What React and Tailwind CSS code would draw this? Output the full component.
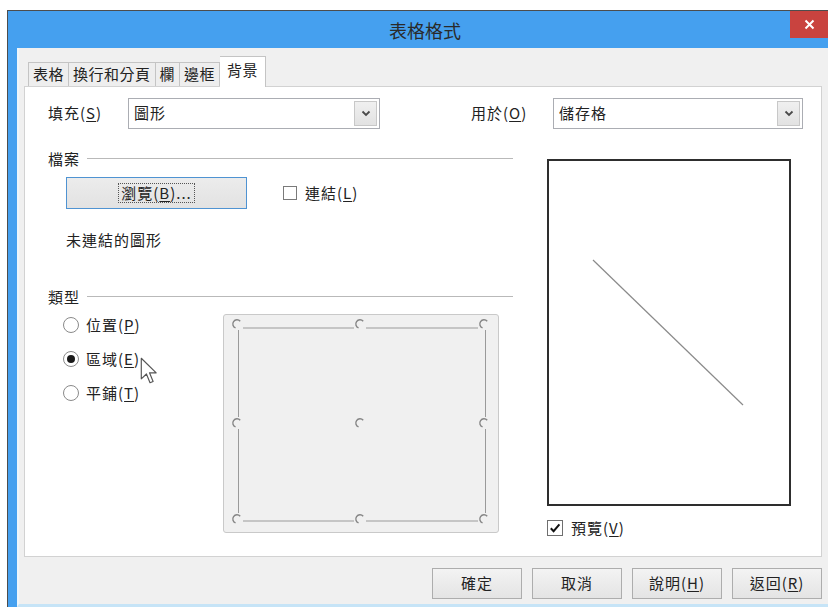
import React from "react";

function U({ c }) {
  return <span className="underline underline-offset-[2px] decoration-1">{c}</span>;
}

function Chevron() {
  return (
    <svg width="10" height="7" viewBox="0 0 10 7">
      <path d="M1.5 1.5 L5 5 L8.5 1.5" fill="none" stroke="#4a4a4a" strokeWidth="1.8" />
    </svg>
  );
}

function Select({ w, value }) {
  return (
    <div className={`${w} h-[31px] bg-white border border-[#abadb3] flex items-center pl-[5px] pr-[2px]`}>
      <span className="flex-1">{value}</span>
      <div className="w-[23px] h-[25px] bg-linear-to-b from-[#f0f0f0] to-[#e2e2e2] border border-[#c8c8c8] flex items-center justify-center">
        <Chevron />
      </div>
    </div>
  );
}

function Heading({ children }) {
  return (
    <div className="h-[17px] flex items-center gap-[7px]">
      <span className="leading-none">{children}</span>
      <div className="flex-1 h-px bg-[#b9b9b9]" />
    </div>
  );
}

function Radio({ checked, children }) {
  return (
    <div className="h-[20px] flex items-center gap-[7px]">
      <div className="w-[16px] h-[16px] rounded-full border border-[#8a8a8a] bg-white flex items-center justify-center">
        {checked && <div className="w-[8px] h-[8px] rounded-full bg-[#1a1a1a]" />}
      </div>
      <span>{children}</span>
    </div>
  );
}

function Btn({ children }) {
  return (
    <div className="w-[90px] h-[31px] border border-[#adadad] bg-linear-to-b from-[#f3f3f3] to-[#e4e4e4] flex items-center justify-center">
      {children}
    </div>
  );
}

function Marker({ cx, cy }) {
  const r = 4.2;
  const sx = cx + r * Math.cos((40 * Math.PI) / 180);
  const sy = cy - r * Math.sin((40 * Math.PI) / 180);
  const ex = cx + r * Math.cos((110 * Math.PI) / 180);
  const ey = cy + r * Math.sin((110 * Math.PI) / 180);
  return (
    <g>
      <circle cx={cx} cy={cy} r="5" fill="#f0f0f0" />
      <path d={`M${sx} ${sy} A${r} ${r} 0 1 0 ${ex} ${ey}`} fill="none" stroke="#858585" strokeWidth="1.4" />
    </g>
  );
}

function GridBox() {
  const xs = [13, 136, 260];
  const ys = [9, 108, 204];
  const line = "#9a9a9a";
  return (
    <svg width="274" height="217" viewBox="0 0 274 217">
      <line x1="19" y1="13" x2="130" y2="13" stroke={line} />
      <line x1="142" y1="13" x2="254" y2="13" stroke={line} />
      <line x1="19" y1="206" x2="130" y2="206" stroke={line} />
      <line x1="142" y1="206" x2="254" y2="206" stroke={line} />
      <line x1="14.5" y1="15" x2="14.5" y2="102" stroke={line} />
      <line x1="14.5" y1="114" x2="14.5" y2="198" stroke={line} />
      <line x1="261.5" y1="15" x2="261.5" y2="102" stroke={line} />
      <line x1="261.5" y1="114" x2="261.5" y2="198" stroke={line} />
      {ys.map((y) => xs.map((x) => <Marker key={`${x}-${y}`} cx={x} cy={y} />))}
    </svg>
  );
}

export default function App() {
  return (
    <div className="relative w-[828px] h-[607px] overflow-hidden bg-white pt-[10px] pl-[7px] font-['Noto_Sans_CJK_TC','Noto_Sans',sans-serif] text-[15px] tracking-[1px] text-[#222222]">
      <div className="h-full flex flex-col border-l border-t border-[#4d4d4d] bg-[#45a0ef]">
        {/* Title bar */}
        <div className="relative h-[37px] shrink-0 flex items-center justify-center pl-[14px]">
          <span className="text-[18px] tracking-normal text-[#2a2a2a] leading-none">表格格式</span>
          <div className="absolute right-0 top-0 w-[38px] h-[27px] bg-[#c9433f] flex items-center justify-center">
            <svg width="11" height="11" viewBox="0 0 11 11">
              <path d="M1.5 1.5 L9.5 9.5 M9.5 1.5 L1.5 9.5" stroke="#ffffff" strokeWidth="2" />
            </svg>
          </div>
        </div>

        {/* Content */}
        <div className="flex-1 ml-[9px] bg-[#f0f0f0] border-l-2 border-[#eef6fb] border-b-[3px] border-b-[#c6e4f7] pl-[5px] pr-[6px] pt-[8px] flex flex-col">
          {/* Tabs */}
          <div className="h-[30px] flex items-end pl-[4px] text-[15px] tracking-[0.5px]">
            <div className="h-[24px] px-[4px] border border-b-0 border-[#c4c4c4] bg-[#eeeeee] flex items-center">表格</div>
            <div className="h-[24px] px-[4px] border border-b-0 border-l-0 border-[#c4c4c4] bg-[#eeeeee] flex items-center">換行和分頁</div>
            <div className="h-[24px] px-[4px] border border-b-0 border-l-0 border-[#c4c4c4] bg-[#eeeeee] flex items-center">欄</div>
            <div className="h-[24px] px-[4px] border border-b-0 border-l-0 border-[#c4c4c4] bg-[#eeeeee] flex items-center">邊框</div>
            <div className="relative z-10 h-[31px] -mb-px px-[7px] pb-[4px] border border-b-0 border-l-0 border-[#c4c4c4] bg-white flex items-center">背景</div>
          </div>

          {/* Panel */}
          <div className="h-[471px] bg-white border border-[#d2d2d2] pt-[11px] flex flex-col">
            {/* Row 1 */}
            <div className="h-[31px] flex items-center pl-[23px]">
              <span className="w-[80px]">填充(<U c="S" />)</span>
              <Select w="w-[252px]" value="圖形" />
              <span className="ml-[91px] w-[82px]">用於(<U c="O" />)</span>
              <Select w="w-[250px]" value="儲存格" />
            </div>

            {/* Lower area */}
            <div className="mt-[21px] flex items-start">
              {/* Left column */}
              <div className="w-[488px] pl-[23px] flex flex-col">
                <Heading>檔案</Heading>
                <div className="mt-[10px] pl-[18px] flex items-center">
                  <div className="w-[181px] h-[32px] border border-[#4f93d2] bg-linear-to-b from-[#ececec] to-[#e2e2e2] flex items-center justify-center">
                    <span className="px-[2px] leading-[18px] outline-1 outline-dotted outline-[#555]">
                      瀏覽(<U c="B" />)...
                    </span>
                  </div>
                  <div className="ml-[36px] flex items-center gap-[8px]">
                    <div className="w-[14px] h-[14px] border border-[#7a7a7a] bg-white" />
                    <span>連結(<U c="L" />)</span>
                  </div>
                </div>
                <div className="mt-[22px] pl-[18px] h-[18px] flex items-center">未連結的圖形</div>
                <div className="mt-[39px]">
                  <Heading>類型</Heading>
                </div>
                <div className="mt-[9px] flex items-start">
                  <div className="w-[175px] pl-[15px] pt-[1px] flex flex-col gap-[14px]">
                    <Radio>位置(<U c="P" />)</Radio>
                    <Radio checked>區域(<U c="E" />)</Radio>
                    <Radio>平鋪(<U c="T" />)</Radio>
                  </div>
                  <div className="w-[276px] h-[219px] rounded-[3px] border border-[#c9c9c9] bg-[#f0f0f0]">
                    <GridBox />
                  </div>
                </div>
              </div>

              {/* Right column */}
              <div className="ml-[34px] mt-[9px] flex flex-col">
                <div className="w-[244px] h-[347px] border-2 border-[#2e2e2e] bg-white">
                  <svg width="240" height="343" viewBox="0 0 240 343">
                    <line x1="44" y1="99" x2="194" y2="244" stroke="#8a8a8a" strokeWidth="1.2" />
                  </svg>
                </div>
                <div className="mt-[13px] h-[18px] flex items-center gap-[8px]">
                  <div className="w-[16px] h-[16px] border border-[#6f6f6f] bg-white flex items-center justify-center">
                    <svg width="12" height="12" viewBox="0 0 12 12">
                      <path d="M1.8 6.2 L4.6 9.2 L10.4 2.4" fill="none" stroke="#111" strokeWidth="2" />
                    </svg>
                  </div>
                  <span>預覽(<U c="V" />)</span>
                </div>
              </div>
            </div>
          </div>

          {/* Buttons */}
          <div className="mt-[11px] flex justify-end gap-[10px]">
            <Btn>確定</Btn>
            <Btn>取消</Btn>
            <Btn>說明(<U c="H" />)</Btn>
            <Btn>返回(<U c="R" />)</Btn>
          </div>
        </div>
      </div>

      {/* Mouse cursor */}
      <svg className="absolute left-[140px] top-[357px]" width="18" height="27" viewBox="0 0 14 21">
        <path d="M1 1 L1 17 L5 13.2 L7.8 20 L10.2 19 L7.4 12.3 L12.6 12.3 Z" fill="#ffffff" stroke="#555" strokeWidth="0.9" strokeLinejoin="round" />
      </svg>
    </div>
  );
}
